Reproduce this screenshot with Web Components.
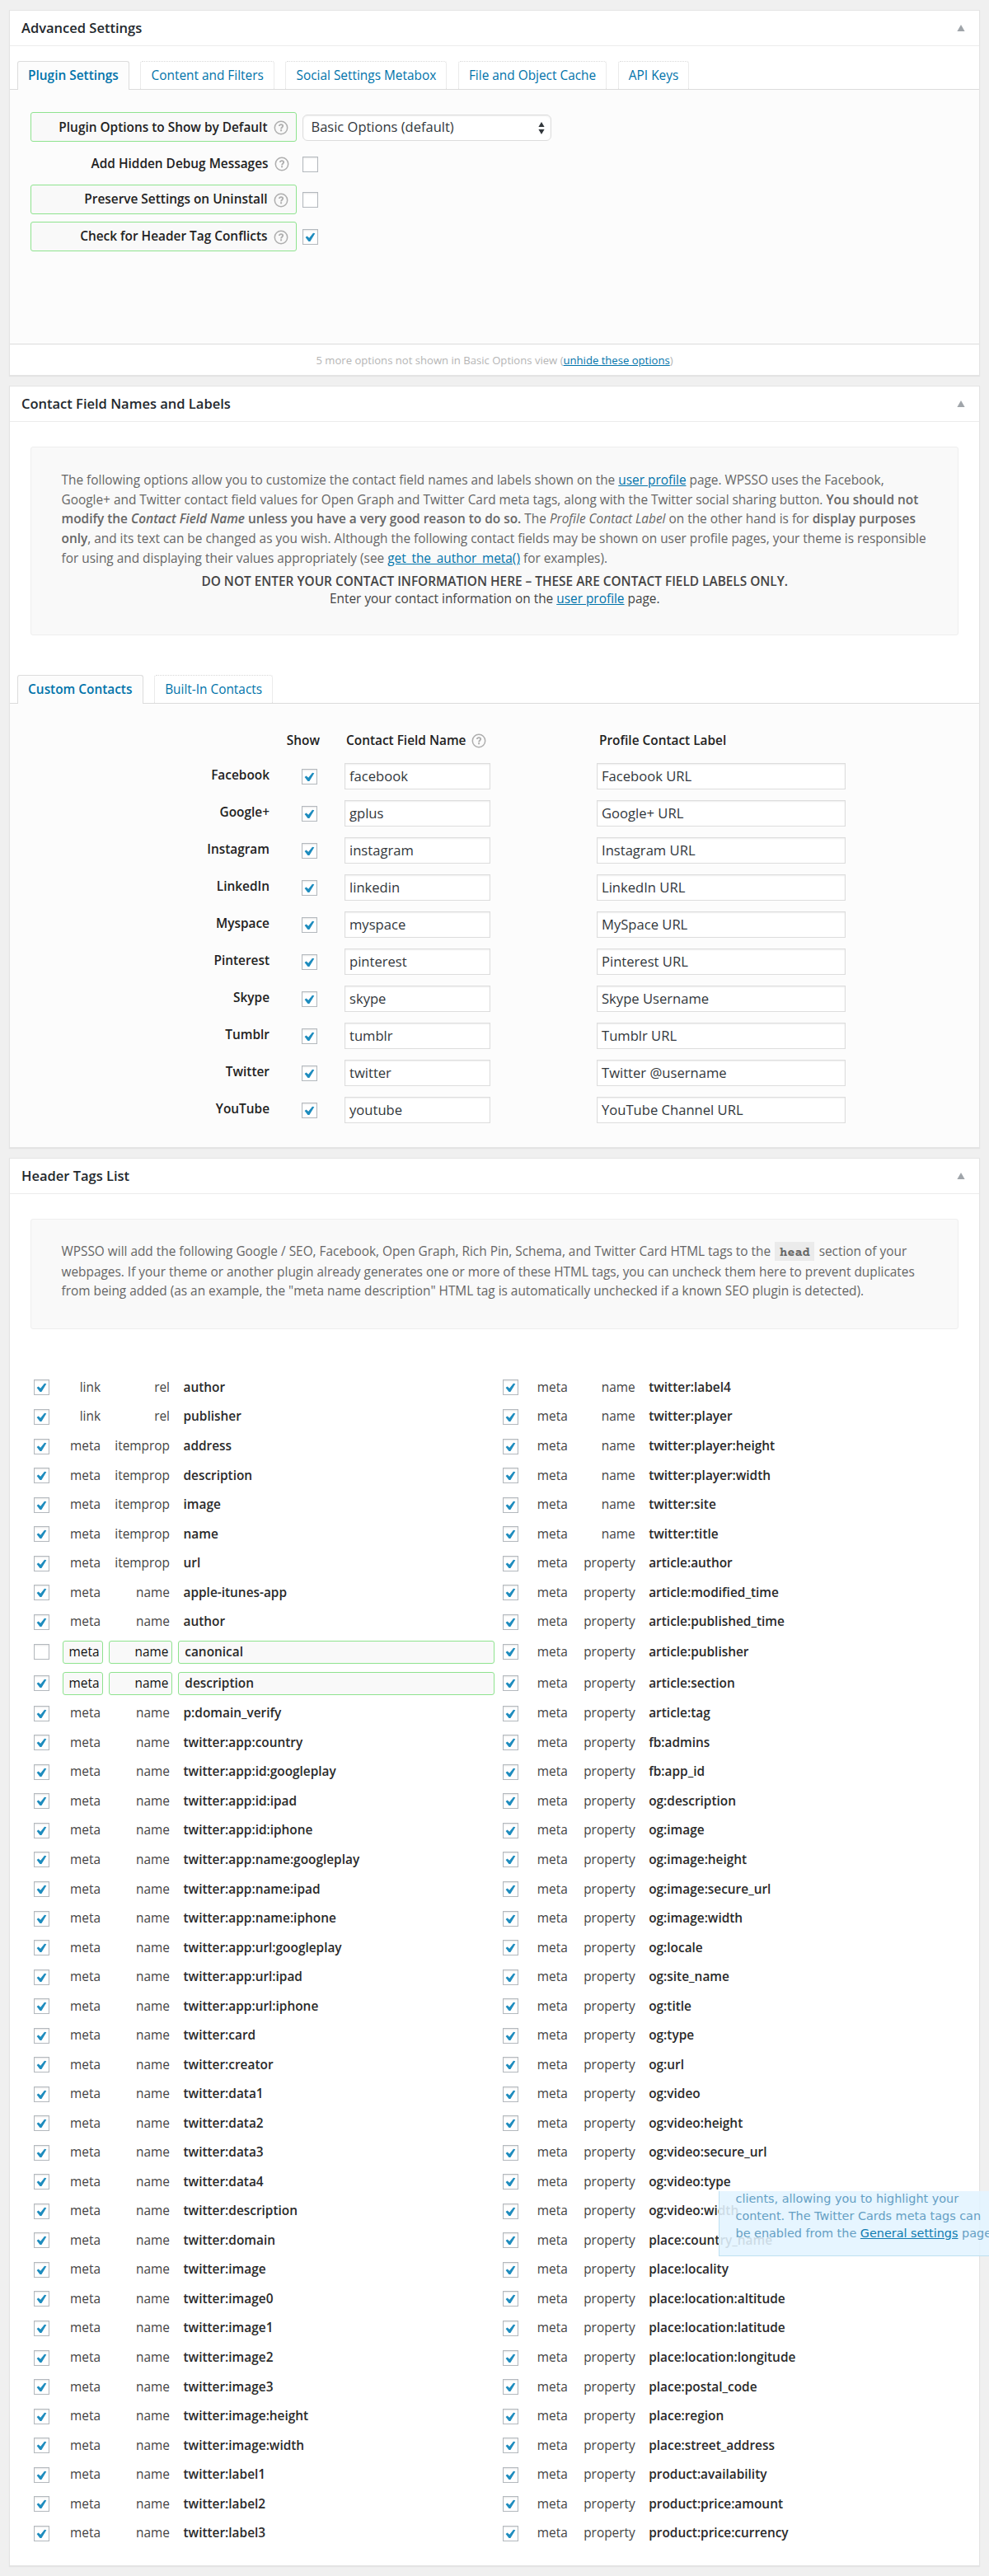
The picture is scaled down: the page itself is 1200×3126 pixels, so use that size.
<!DOCTYPE html>
<html lang="en"><head><meta charset="utf-8"><title>Advanced Settings</title>
<style>
html,body{margin:0}
body{width:1200px;height:3126px;overflow:hidden;position:relative;background:#f0f0f0;font-family:"Open Sans",sans-serif;font-size:15.4px;color:#444}
main{display:flex;flex-direction:column;gap:12px;padding:12px 11px 12px;box-sizing:border-box;height:3126px}
a{color:#0073aa;text-decoration:underline}
b{font-weight:600}
.options{display:flex;flex-direction:column;height:308px;padding-top:22px;box-sizing:border-box;background:#fcfcfc}
.footer{height:37px;border-top:1px solid #dcdcdc;text-align:center;line-height:38px;font-size:13.1px;color:#b5b5b5}
code{display:inline-block;box-sizing:border-box;height:23.4px;font:bold 15.4px "Courier Prime","Courier 10 Pitch","Liberation Mono",monospace;line-height:27.2px;background:#ebebeb;padding:0 5.6px;margin:0 1.2px 1.7px}
</style></head><body>
<main>
<meta-panel heading="Advanced Settings" style="height:444px">
  <tab-bar slot="body" style="--lead:18px" items="Plugin Settings|Content and Filters|Social Settings Metabox|File and Object Cache|API Keys"></tab-bar>
  <div class="options" slot="body">
    <option-row marked label="Plugin Options to Show by Default" style="height:46px"><select-box>Basic Options (default)</select-box></option-row>
    <option-row label="Add Hidden Debug Messages" style="height:42px"><check-box></check-box></option-row>
    <option-row marked label="Preserve Settings on Uninstall" style="height:45px"><check-box></check-box></option-row>
    <option-row marked label="Check for Header Tag Conflicts" style="height:45px"><check-box checked></check-box></option-row>
  </div>
  <div class="footer" slot="body">5 more options not shown in Basic Options view (<a>unhide these options</a>)</div>
</meta-panel>
<meta-panel heading="Contact Field Names and Labels" style="height:925px">
  <note-box slot="body" style="height:229px;--gap:48px">The following options allow you to customize the contact field names and labels shown on the <a>user profile</a> page. WPSSO uses the Facebook,<br>Google+ and Twitter contact field values for Open Graph and Twitter Card meta tags, along with the Twitter social sharing button. <b>You should not</b><br><b>modify the <i>Contact Field Name</i> unless you have a very good reason to do so.</b> The <i>Profile Contact Label</i> on the other hand is for <b>display purposes</b><br><b>only</b>, and its text can be changed as you wish. Although the following contact fields may be shown on user profile pages, your theme is responsible<br>for using and displaying their values appropriately (see <a>get_the_author_meta()</a> for examples).
    <div slot="center"><b>DO NOT ENTER YOUR CONTACT INFORMATION HERE – THESE ARE CONTACT FIELD LABELS ONLY.</b><br>Enter your contact information on the <a>user profile</a> page.</div></note-box>
  <tab-bar slot="body" style="--lead:0px" items="Custom Contacts|Built-In Contacts"></tab-bar>
  <contact-table slot="body"></contact-table>
</meta-panel>
<meta-panel heading="Header Tags List" style="height:1709px">
  <note-box slot="body" style="height:134px;--gap:53.2px;--lead:26.5px">WPSSO will add the following Google / SEO, Facebook, Open Graph, Rich Pin, Schema, and Twitter Card HTML tags to the <code>head</code> section of your<br>webpages. If your theme or another plugin already generates one or more of these HTML tags, you can uncheck them here to prevent duplicates<br>from being added (as an example, the "meta name description" HTML tag is automatically unchecked if a known SEO plugin is detected).</note-box>
  <tag-table slot="body"></tag-table>
</meta-panel>
</main>
<hover-tip></hover-tip>
<script>
const define=(name,html,setup)=>{const t=document.createElement('template');t.innerHTML=html;
customElements.define(name,class extends HTMLElement{constructor(){super();this.attachShadow({mode:'open'})}
connectedCallback(){this.shadowRoot.replaceChildren(t.content.cloneNode(true));if(setup)setup(this,this.shadowRoot)}})};

define('meta-panel',`<style>:host{display:flex;flex-direction:column;box-sizing:border-box;flex:none;background:#fff;border:1px solid #e4e4e4;box-shadow:0 1px 1px rgba(0,0,0,.05)}
header{display:flex;justify-content:space-between;align-items:center;height:42px;border-bottom:1px solid #ececec;padding:0 17px 0 14px;color:#23282d}
h2{margin:0;font-size:16.5px;font-weight:600;line-height:42px}svg{display:block}</style>
<header><h2></h2><svg width="10" height="8" viewBox="0 0 10 8"><path d="M5 0L9.6 8H.4z" fill="#a0a5aa"/></svg></header><slot name="body"></slot>`,
(h,r)=>r.querySelector('h2').textContent=h.getAttribute('heading'));

define('tab-bar',`<style>:host{display:block;padding-top:var(--lead)}
.bar{display:flex;gap:13.5px;height:35px;padding-left:9px;box-sizing:border-box;border-bottom:1px solid #dcdcdc}
span{box-sizing:border-box;height:34px;padding:0 12.1px;line-height:34px;border:1px dotted #d8d8d8;border-bottom:0;border-radius:3px 3px 0 0;color:#0073aa;white-space:nowrap}
span:first-child{height:35px;font-weight:600;border:1px solid #dcdcdc;border-bottom:0;background:#fcfcfc}</style><div class="bar"></div>`,
(h,r)=>h.getAttribute('items').split('|').forEach(t=>{const s=document.createElement('span');s.textContent=t;r.querySelector('.bar').append(s)}));

define('help-icon',`<style>:host{display:block;flex:none;width:18px;height:18px;margin-top:2px}svg{display:block}</style>
<svg width="18" height="18" viewBox="0 0 18 18" fill="none" stroke="#aeaeae"><circle cx="9" cy="9" r="7.7" stroke-width="1.5"/><path d="M6.8 7.1C6.8 5.8 7.8 5.2 9 5.2S11.2 5.9 11.2 7C11.2 8.5 9.1 8.5 9.1 10.4" stroke-width="1.8"/><path d="M8.1 12.3H10.1" stroke-width="2"/></svg>`);

define('check-box',`<style>:host{display:block;flex:none;box-sizing:border-box;width:19px;height:19px;border:1px solid #b4b9be;background:#fff;box-shadow:inset 0 1px 2px rgba(0,0,0,.1)}
svg{display:none;width:17px;height:17px}:host([checked]) svg{display:block}</style>
<svg viewBox="0 0 17 17"><path d="M2.6 9L4.6 7.4L7.2 9.7L12 3.8L14.3 4.2L8.4 14H6.5Z" fill="#1e8cbe"/></svg>`);

define('select-box',`<style>:host{display:flex;align-items:center;justify-content:space-between;box-sizing:border-box;width:302px;height:32px;margin-top:2px;padding:0 7px 0 10px;border:1px solid #ddd;border-radius:6px;background:#fff;box-shadow:inset 0 1px 2px rgba(0,0,0,.07);font-size:16.5px;line-height:28px;color:#32373c}svg{display:block}div{padding-bottom:2px}</style>
<div><slot></slot></div><svg width="8" height="15" viewBox="0 0 8 15" fill="#32373c"><path d="M4 0L7.6 6H.4zM4 15L.4 9H7.6z"/></svg>`);

define('option-row',`<style>:host{display:flex;align-items:center;padding-left:24.5px}
.l{display:flex;align-items:center;justify-content:flex-end;gap:7px;box-sizing:border-box;width:323px;height:36px;padding-right:8px;margin-right:7px;font-weight:600;color:#222;border:1px solid transparent;border-radius:3px}
::slotted(check-box){margin-top:2px}
:host([marked]) .l{border-color:#8fe38f;background:#f9f9f9;padding-right:9px}</style><div class="l"><span></span><help-icon></help-icon></div><slot></slot>`,
(h,r)=>r.querySelector('span').textContent=h.getAttribute('label'));

define('note-box',`<style>:host{display:block;box-sizing:border-box;margin:30px 25px var(--gap);padding:var(--lead,27.8px) 36px 0 36.5px;border:1px solid #eee;border-radius:3px;background:#f9f9f9;line-height:23.8px;color:#666;white-space:nowrap}
.c{text-align:center;line-height:21.2px;color:#444;padding-top:5px}</style><slot></slot><div class="c"><slot name="center"></slot></div>`);

define('text-field',`<style>:host{display:block;box-sizing:border-box;height:32px;padding-left:5px;border:1px solid #ddd;background:#fff;box-shadow:inset 0 1px 2px rgba(0,0,0,.07);font-size:16.6px;line-height:30px;color:#32373c}</style><slot></slot>`);

define('contact-table',`<style>:host{display:block;background:#fcfcfc;height:538px;padding-top:27px;box-sizing:border-box}
.r{display:grid;grid-template-columns:315px 77px 14px 177px 129px 302px;align-items:center;height:45px}
.r b{color:#222;font-weight:600;text-align:right;padding-bottom:3px}.r check-box{justify-self:end;margin:1px 19.5px 0 0}
.h{height:34px;margin-bottom:4.5px}.r.h b{text-align:left;padding-bottom:0}.r.h .s{justify-self:end;padding-right:16px}.h span{display:flex;align-items:center;gap:7px;padding-left:2px}.r.h .p{padding-left:3px}</style>
<div class="r h"><i></i><b class="s">Show</b><i></i><span><b>Contact Field Name</b><help-icon></help-icon></span><i></i><b class="p">Profile Contact Label</b></div>`,
(h,r)=>[['Facebook','facebook','Facebook URL'],['Google+','gplus','Google+ URL'],['Instagram','instagram','Instagram URL'],['LinkedIn','linkedin','LinkedIn URL'],['Myspace','myspace','MySpace URL'],['Pinterest','pinterest','Pinterest URL'],['Skype','skype','Skype Username'],['Tumblr','tumblr','Tumblr URL'],['Twitter','twitter','Twitter @username'],['YouTube','youtube','YouTube Channel URL']].forEach(([a,b,c])=>{
const d=document.createElement('div');d.className='r';d.innerHTML=`<b>${a}</b><check-box checked></check-box><i></i><text-field>${b}</text-field><i></i><text-field>${c}</text-field>`;r.append(d)}));

define('tag-table',`<style>:host{display:grid;grid-auto-flow:column;grid-template-columns:569px 570px;grid-template-rows:repeat(9,35.54px) 37.8px 37.8px repeat(29,35.54px);padding-left:29px}
.t{display:grid;align-items:center;grid-template-columns:19px 15.5px 49px 7px 77px 7px 384px}
.t.right{grid-template-columns:19px 14px 48.2px 7px 75px 7px 384px}
span{white-space:nowrap;box-sizing:border-box;height:28px;line-height:27px}
.a,.b{text-align:right;padding-right:2.5px}.c{padding-left:7px;font-weight:600;color:#2a2a2a}
.m span{border:1px solid #8fe38f;border-radius:3px;background:#f9f9f9;line-height:25.5px}.m .c{padding-left:7.8px}
.m .a,.m .b{color:#111;padding-right:3px}</style>`,
(h,r)=>{const L=[['link','rel','author publisher'],['meta','itemprop','address description image name url'],['meta','name','apple-itunes-app author canonical description p:domain_verify twitter:app:country twitter:app:id:googleplay twitter:app:id:ipad twitter:app:id:iphone twitter:app:name:googleplay twitter:app:name:ipad twitter:app:name:iphone twitter:app:url:googleplay twitter:app:url:ipad twitter:app:url:iphone twitter:card twitter:creator twitter:data1 twitter:data2 twitter:data3 twitter:data4 twitter:description twitter:domain twitter:image twitter:image0 twitter:image1 twitter:image2 twitter:image3 twitter:image:height twitter:image:width twitter:label1 twitter:label2 twitter:label3 twitter:label4 twitter:player twitter:player:height twitter:player:width twitter:site twitter:title'],['meta','property','article:author article:modified_time article:published_time article:publisher article:section article:tag fb:admins fb:app_id og:description og:image og:image:height og:image:secure_url og:image:width og:locale og:site_name og:title og:type og:url og:video og:video:height og:video:secure_url og:video:type og:video:width place:country_name place:locality place:location:altitude place:location:latitude place:location:longitude place:postal_code place:region place:street_address product:availability product:price:amount product:price:currency']];
let n=0;for(const [a,b,names] of L)for(const c of names.split(' ')){const d=document.createElement('div');d.className='t'+(n>39?' right':'')+(n==9||n==10?' m':'');d.innerHTML=`<check-box${n==9?'':' checked'}></check-box><i></i><span class="a">${a}</span><i></i><span class="b">${b}</span><i></i><span class="c">${c}</span>`;r.append(d);n++}});

define('hover-tip',`<style>:host{position:absolute;left:872px;top:2659px;width:328px;height:79px;overflow:hidden;box-sizing:border-box;padding:0 0 0 19.5px;border-left:1px solid #bee0f0;border-bottom:1px solid #bee0f0;background:rgba(227,244,255,.88);font:14.4px "DejaVu Sans",sans-serif;line-height:21.3px;color:#659fc4;white-space:nowrap}a{color:#0f7bb0;text-decoration:underline}div{margin-top:-1.5px}</style><div>clients, allowing you to highlight your<br>content. The Twitter Cards meta tags can<br>be enabled from the <a>General settings</a> page</div>`);
</script></body></html>
